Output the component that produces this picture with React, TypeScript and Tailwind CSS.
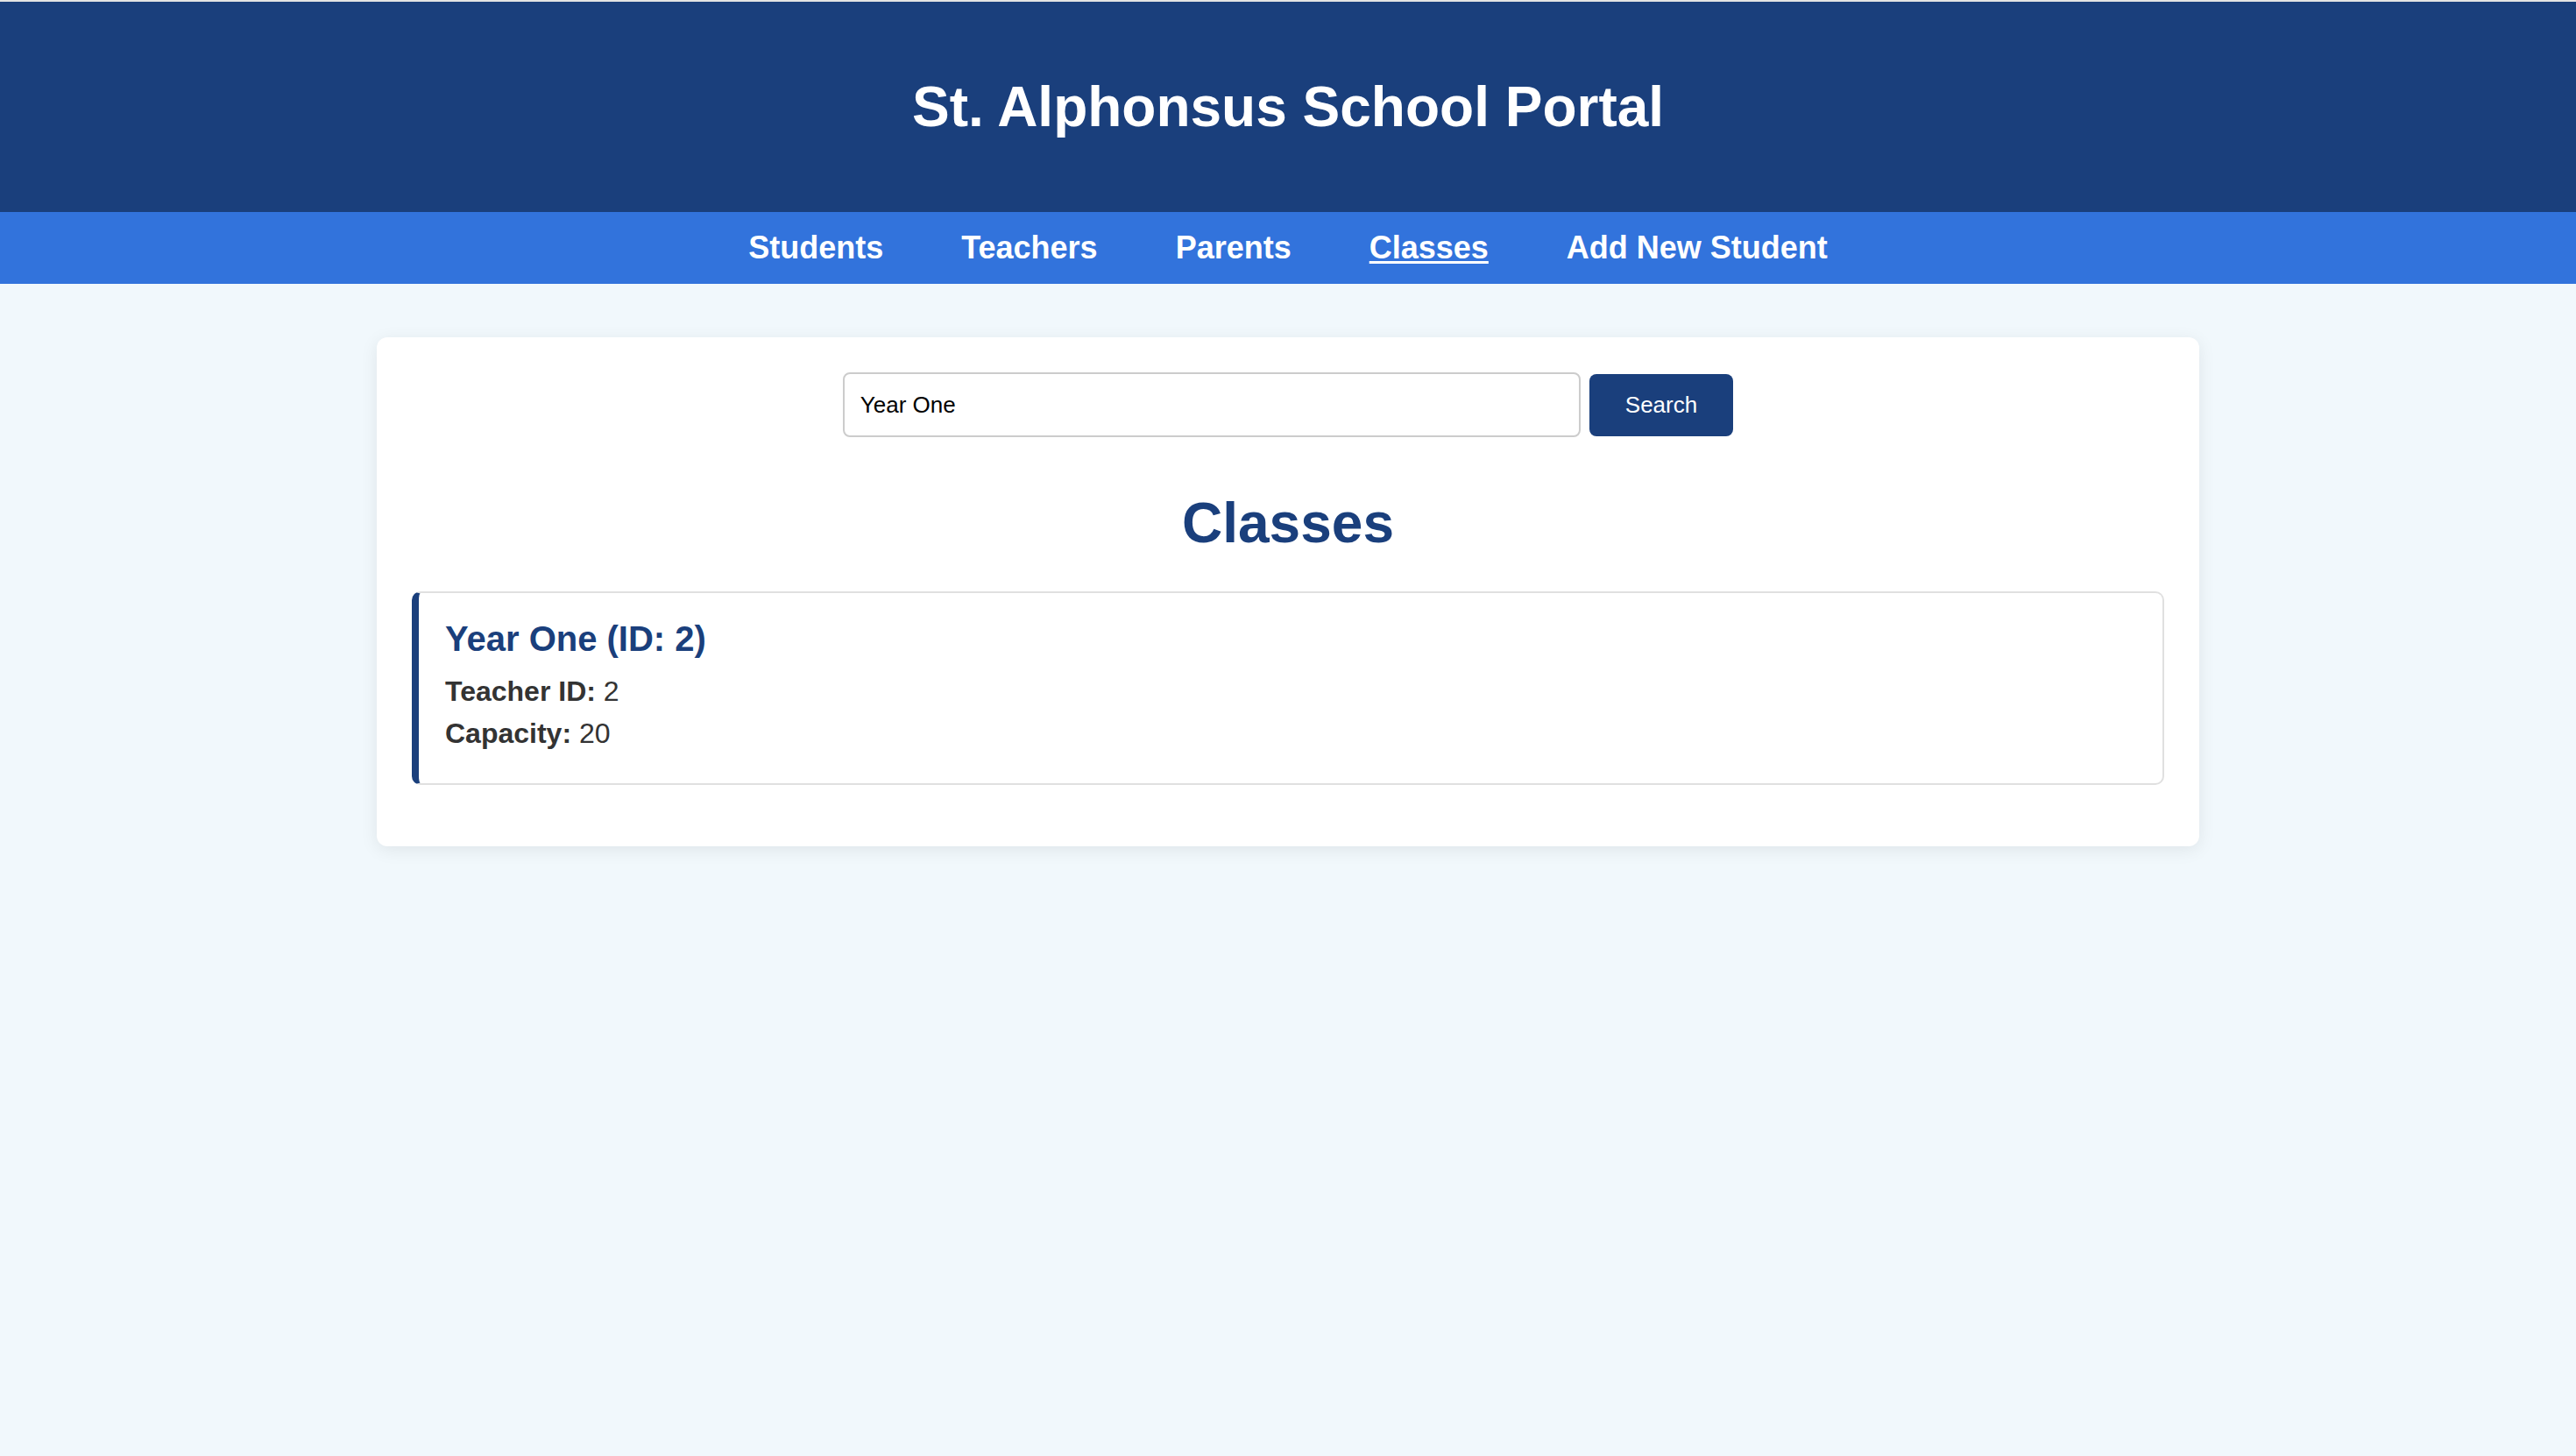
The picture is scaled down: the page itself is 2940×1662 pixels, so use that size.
import { useState } from 'react';

const links = ['Students', 'Teachers', 'Parents', 'Classes', 'Add New Student'];

export default function App() {
  const [query, setQuery] = useState('Year One');

  return (
    <div className="min-h-screen bg-[#f1f8fc] font-['Liberation_Sans',Arial,sans-serif]">
      <div className="h-[2px] bg-[#e4e4e4]" />

      {/* Header */}
      <header className="bg-[#1a3f7c] py-[40px] text-center">
        <h1 className="my-[43px] text-[64px] leading-[74px] font-bold text-white">St. Alphonsus School Portal</h1>
      </header>

      <nav className="flex justify-center gap-[89px] bg-[#3273dc] pt-[20px] pb-[21px]">
        {links.map((name) => (
          <a
            key={name}
            href="#"
            className={`text-[36px] leading-[41px] font-bold text-white ${
              name === 'Classes' ? 'underline decoration-[3px] underline-offset-[3px]' : 'no-underline'
            }`}
          >
            {name}
          </a>
        ))}
      </nav>

      {/* Main content */}
      <main className="mx-auto mt-[61px] w-[2080px] rounded-[12px] bg-white p-[40px] shadow-[0_4px_20px_rgba(0,0,0,0.08)]">
        <form className="flex items-center justify-center gap-[10px]" onSubmit={(e) => e.preventDefault()}>
          <input
            value={query}
            onChange={(e) => setQuery(e.target.value)}
            className="h-[74px] w-[842px] rounded-[8px] border-2 border-[#cccccc] px-[18px] text-[26px] text-black outline-none"
          />
          <button type="submit" className="h-[71px] rounded-[8px] bg-[#1a3f7c] px-[41px] text-[26px] text-white">
            Search
          </button>
        </form>

        <h2 className="mt-[61px] mb-[41px] text-center text-[64px] leading-[74px] font-bold text-[#1a3f7c]">Classes</h2>

        <div className="mb-[30px] rounded-[10px] border-2 border-l-8 border-[#e0e0e0] border-l-[#1a3f7c] px-[30px] pt-[29px] pb-[33px]">
          <h3 className="text-[40px] leading-[46px] font-bold text-[#1a3f7c]">Year One (ID: 2)</h3>
          <p className="mt-[13px] text-[32px] leading-[48px] text-[#333333]">
            <strong>Teacher ID:</strong> 2
          </p>
          <p className="text-[32px] leading-[48px] text-[#333333]">
            <strong>Capacity:</strong> 20
          </p>
        </div>
      </main>
    </div>
  );
}
